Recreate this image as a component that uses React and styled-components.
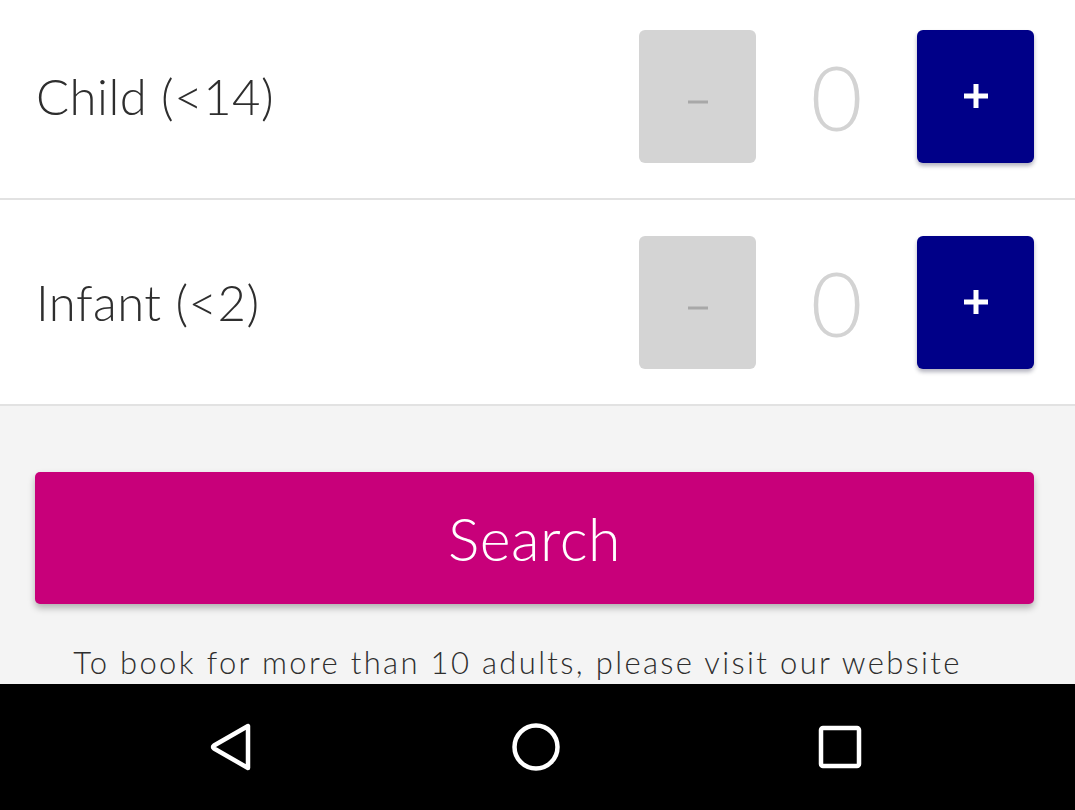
import React from "react";
import styled, { createGlobalStyle } from "styled-components";

const Global = createGlobalStyle`
  html, body { margin: 0; padding: 0; }
  body { font-family: Lato, "Open Sans", sans-serif; background: #f4f4f4; }
  * { box-sizing: border-box; }
`;

const Screen = styled.div`
  width: 1075px;
  height: 810px;
  display: flex;
  flex-direction: column;
  overflow: hidden;
`;

const Content = styled.div`
  flex: 1;
  overflow: hidden;
  background: #f4f4f4;
  display: flex;
  flex-direction: column;
`;

const List = styled.div`
  margin-top: -6px;
  display: flex;
  flex-direction: column;
`;

const Row = styled.div`
  height: 206px;
  background: #ffffff;
  border-bottom: 2px solid #e2e2e2;
  display: flex;
  align-items: center;
  padding: 0 41px 0 36px;
`;

const Label = styled.div`
  flex: 1;
  font-size: 49px;
  font-weight: 300;
  color: #2e2e2e;
  letter-spacing: 0.5px;
`;

const StepButton = styled.button`
  width: 117px;
  height: 133px;
  border: none;
  border-radius: 6px;
  padding: 0;
  display: flex;
  align-items: center;
  justify-content: center;
  background: ${(p) => (p.$active ? "#000088" : "#d4d4d4")};
  box-shadow: ${(p) => (p.$active ? "0 3px 4px rgba(0,0,40,0.3)" : "none")};
  cursor: pointer;
`;

const Count = styled.div`
  width: 161px;
  text-align: center;
  font-size: 90px;
  font-weight: 300;
  color: #d3d3d3;
  line-height: 1;
`;

const SearchArea = styled.div`
  padding: 66px 41px 0 35px;
  display: flex;
  flex-direction: column;
`;

const SearchButton = styled.button`
  height: 132px;
  border: none;
  border-radius: 5px;
  background: #c8007a;
  color: #ffffff;
  font-family: Lato, "Open Sans", sans-serif;
  font-size: 59px;
  font-weight: 300;
  letter-spacing: 0.5px;
  box-shadow: 0 4px 7px rgba(0, 0, 0, 0.28);
  display: flex;
  align-items: center;
  justify-content: center;
  padding: 0;
`;

const Note = styled.p`
  margin: 38px 34px 0 0;
  font-size: 31px;
  font-weight: 300;
  line-height: 40px;
  letter-spacing: 2.35px;
  color: #2e2e2e;
  text-align: center;
  white-space: nowrap;
`;

const NavBar = styled.div`
  height: 126px;
  flex: none;
  background: #000000;
  display: grid;
  grid-template-columns: repeat(3, 304px);
  justify-content: center;
  align-items: center;
`;

const NavItem = styled.div`
  display: flex;
  justify-content: center;
  align-items: center;
`;

const Minus = () => (
  <svg width="20" height="8" viewBox="0 0 20 8" style={{ marginTop: 12 }}>
    <rect x="0" y="2.5" width="20" height="3" fill="#a8a8a8" />
  </svg>
);

const Plus = () => (
  <svg width="24" height="24" viewBox="0 0 24 24">
    <rect x="0" y="9.5" width="24" height="5" fill="#ffffff" />
    <rect x="9.5" y="0" width="5" height="24" fill="#ffffff" />
  </svg>
);

const Counter = ({ label }) => (
  <Row>
    <Label>{label}</Label>
    <StepButton aria-label="decrease">
      <Minus />
    </StepButton>
    <Count>0</Count>
    <StepButton $active aria-label="increase">
      <Plus />
    </StepButton>
  </Row>
);

export default function App() {
  return (
    <Screen>
      <Global />
      <Content>
        <List>
          <Counter label="Child (<14)" />
          <Counter label="Infant (<2)" />
        </List>
        <SearchArea>
          <SearchButton>Search</SearchButton>
          <Note>To book for more than 10 adults, please visit our website</Note>
        </SearchArea>
      </Content>
      <NavBar>
        <NavItem>
          <svg width="46" height="50" viewBox="0 0 46 50" style={{ marginRight: 5 }}>
            <path
              d="M40 4 L40 46 L6 26.5 Q4 25 6 23.5 Z"
              fill="none"
              stroke="#ffffff"
              strokeWidth="4.5"
              strokeLinejoin="round"
            />
          </svg>
        </NavItem>
        <NavItem>
          <svg width="50" height="50" viewBox="0 0 50 50" style={{ marginRight: 3 }}>
            <circle cx="25" cy="25" r="21.5" fill="none" stroke="#ffffff" strokeWidth="4.5" />
          </svg>
        </NavItem>
        <NavItem>
          <svg width="46" height="46" viewBox="0 0 46 46" style={{ marginRight: 4 }}>
            <rect x="4" y="4" width="38" height="38" rx="2" fill="none" stroke="#ffffff" strokeWidth="4.5" />
          </svg>
        </NavItem>
      </NavBar>
    </Screen>
  );
}
